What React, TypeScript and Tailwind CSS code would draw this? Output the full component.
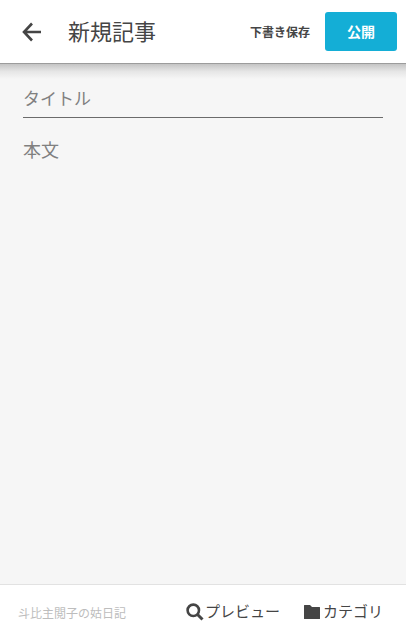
import { useState } from 'react';

function BackIcon() {
  return (
    <svg viewBox="0 0 20 20" className="h-5 w-5" fill="none" stroke="currentColor" strokeWidth="2.6" aria-hidden="true">
      <path d="M19 10H3M10 1.500 2 10l8 8.500" />
    </svg>
  );
}

function SearchIcon() {
  return (
    <svg viewBox="0 0 18 18" className="h-[18px] w-[18px]" fill="none" stroke="currentColor" aria-hidden="true">
      <circle cx="7.300" cy="7.300" r="5.700" strokeWidth="2.600" />
      <path d="M11.500 11.500l5 5" strokeWidth="3" />
    </svg>
  );
}

function FolderIcon() {
  return (
    <svg viewBox="0 0 18 18" className="h-[18px] w-[18px]" fill="currentColor" aria-hidden="true">
      <path d="M0 2.500q0-.5.5-.5H6l2 2h7.500q.5 0 .5.5v11q0 .5-.5.5H.5q-.5 0-.5-.5z" />
    </svg>
  );
}

export default function App() {
  const [title, setTitle] = useState('');
  const [body, setBody] = useState('');

  return (
    <div
      lang="ja"
      className="flex min-h-screen flex-col bg-[#f6f6f6] font-['Noto_Sans_CJK_JP',sans-serif] text-[#454545]"
    >
      {/* HEADER */}
      <header className="flex h-[63px] items-center bg-white pr-[9px] pl-[22px]">
        <button type="button" aria-label="戻る">
          <BackIcon />
        </button>
        <h1 className="ml-[26px] flex-1 pb-1 text-[22px] leading-8">新規記事</h1>
        <button type="button" className="px-[15px] text-xs font-bold">
          下書き保存
        </button>
        <button type="button" className="h-[39px] w-[72px] rounded-[3px] bg-[#14aed6] pb-0.5 text-sm font-bold text-white">
          公開
        </button>
      </header>
      <div className="h-4 border-t border-[#9c9c9c] bg-linear-to-b from-[#c4c4c4] via-[#e6e6e6] to-[#f6f6f6]" />

      {/* EDITOR */}
      <main className="flex flex-1 flex-col px-[23px]">
        <input
          type="text"
          aria-label="タイトル"
          placeholder="タイトル"
          value={title}
          onChange={(e) => setTitle(e.target.value)}
          className="h-[39px] w-full border-b border-[#6b6b6b] pb-0.5 text-[17px] outline-none placeholder:text-[#808080]"
        />
        <textarea
          aria-label="本文"
          placeholder="本文"
          value={body}
          onChange={(e) => setBody(e.target.value)}
          className="mt-[17px] w-full flex-1 resize-none text-lg outline-none placeholder:text-[#808080]"
        />
      </main>

      {/* FOOTER */}
      <footer className="flex h-14 items-center border-t border-[#e2e2e2] bg-white pr-[23px] pl-[18px]">
        <p className="flex-1 text-xs text-[#bdbdbd]">斗比主閲子の姑日記</p>
        <button type="button" className="flex items-center gap-px pb-0.5 text-[15px]">
          <SearchIcon />
          プレビュー
        </button>
        <button type="button" className="ml-6 flex items-center gap-px pb-0.5 text-[15px]">
          <FolderIcon />
          カテゴリ
        </button>
      </footer>
    </div>
  );
}
